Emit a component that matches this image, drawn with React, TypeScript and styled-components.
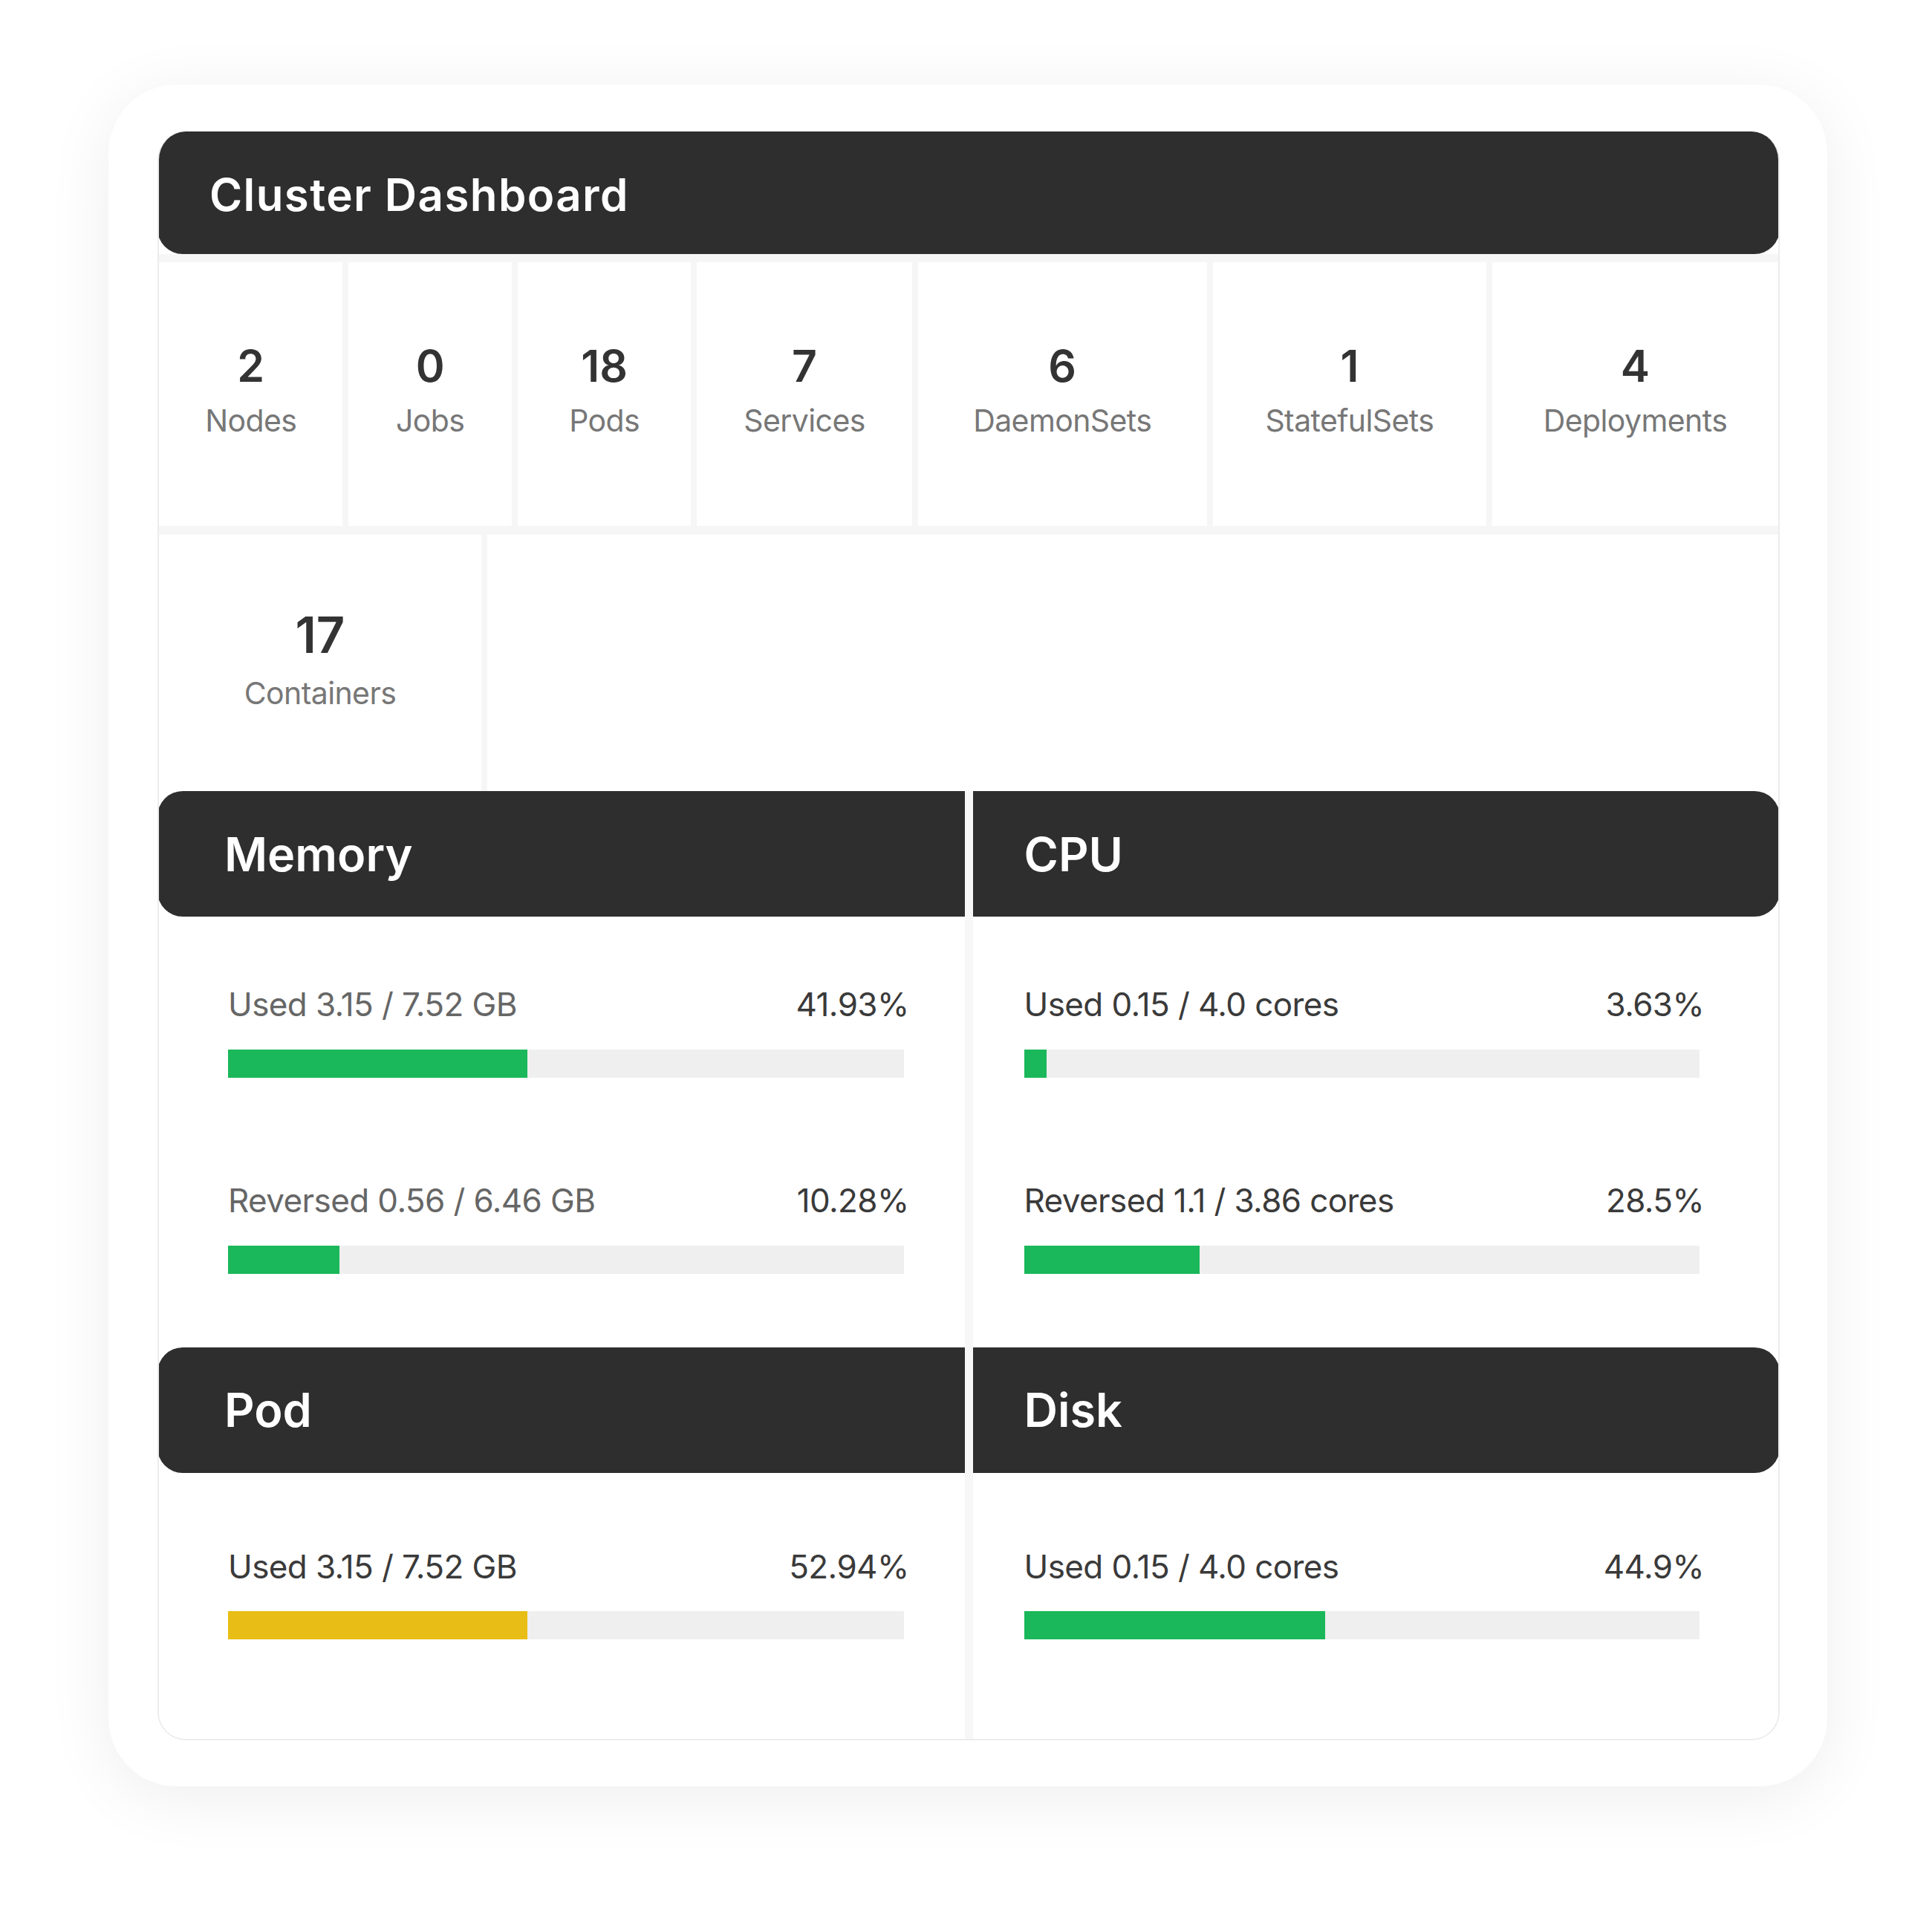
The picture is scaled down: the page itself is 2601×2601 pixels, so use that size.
import React from "react";
import styled, { createGlobalStyle } from "styled-components";

const GlobalStyle = createGlobalStyle`
  * { box-sizing: border-box; }
  body {
    margin: 0;
    background: #ffffff;
    font-family: "Inter", "Noto Sans", "Liberation Sans", sans-serif;
  }
`;

type Side = "left" | "right";

type Metric = { label: string; pct: string; fill: number; color?: string };

const stats = [
  { value: 2, label: "Nodes", basis: 248 },
  { value: 0, label: "Jobs", basis: 220 },
  { value: 18, label: "Pods", basis: 234 },
  { value: 7, label: "Services", basis: 290 },
  { value: 6, label: "DaemonSets", basis: 390 },
  { value: 1, label: "StatefulSets", basis: 369 },
  { value: 4, label: "Deployments", basis: 386 },
];

const sections: {
  side: Side;
  top: { title: string; muted?: boolean; items: Metric[] };
  bottom: { title: string; items: Metric[] };
}[] = [
  {
    side: "left",
    top: {
      title: "Memory",
      muted: true,
      items: [
        { label: "Used 3.15 / 7.52 GB", pct: "41.93%", fill: 44.3 },
        { label: "Reversed 0.56 / 6.46 GB", pct: "10.28%", fill: 16.5 },
      ],
    },
    bottom: {
      title: "Pod",
      items: [{ label: "Used 3.15 / 7.52 GB", pct: "52.94%", fill: 44.3, color: "#e8be16" }],
    },
  },
  {
    side: "right",
    top: {
      title: "CPU",
      items: [
        { label: "Used 0.15 / 4.0 cores", pct: "3.63%", fill: 3.3 },
        { label: "Reversed 1.1 / 3.86 cores", pct: "28.5%", fill: 26 },
      ],
    },
    bottom: {
      title: "Disk",
      items: [{ label: "Used 0.15 / 4.0 cores", pct: "44.9%", fill: 44.6 }],
    },
  },
];

const MetricList = ({ items, side, muted, top, bottom }: {
  items: Metric[];
  side: Side;
  muted?: boolean;
  top: number;
  bottom: number;
}) => (
  <SectionBody $side={side} $top={top} $bottom={bottom}>
    {items.map((it) => (
      <MetricItem key={it.label}>
        <MetricLine $muted={muted}>
          <span>{it.label}</span>
          <Pct>{it.pct}</Pct>
        </MetricLine>
        <Track $side={side}>
          <Fill $color={it.color} style={{ width: `${it.fill}%` }} />
        </Track>
      </MetricItem>
    ))}
  </SectionBody>
);

const App = () => {
  return (
    <>
      <GlobalStyle />
      <Page>
        <Card>
          <Panel>
            <TitleBar>Cluster Dashboard</TitleBar>
            <StatGrid>
              <StatRow>
                {stats.map((s) => (
                  <StatTile key={s.label} $basis={s.basis}>
                    <StatValue>{s.value}</StatValue>
                    <StatLabel>{s.label}</StatLabel>
                  </StatTile>
                ))}
              </StatRow>
              <StatRow $tall={false}>
                <StatTile $basis={434} $fixed>
                  <StatValue $large>17</StatValue>
                  <StatLabel>Containers</StatLabel>
                </StatTile>
                <StatFiller />
              </StatRow>
            </StatGrid>
            <Metrics>
              {sections.map((col) => (
                <MetricColumn key={col.side}>
                  <SectionHead $side={col.side}>{col.top.title}</SectionHead>
                  <MetricList items={col.top.items} side={col.side} muted={col.top.muted} top={92} bottom={99} />
                  <SectionHead $side={col.side}>{col.bottom.title}</SectionHead>
                  <MetricList items={col.bottom.items} side={col.side} top={100} bottom={134} />
                </MetricColumn>
              ))}
            </Metrics>
          </Panel>
        </Card>
      </Page>
    </>
  );
};

const Page = styled.div`
  padding: 114px 0 120px 146px;
`;

const Card = styled.div`
  width: 2314px;
  background: #ffffff;
  border-radius: 92px;
  padding: 63px 64px 62px 66px;
  box-shadow: 0 14px 90px rgba(0, 0, 0, 0.07);
`;

const Panel = styled.div`
  display: flex;
  flex-direction: column;
  border: 2px solid #ececec;
  border-top: none;
  border-radius: 38px;
  background: #ffffff;
  overflow: hidden;
`;

const TitleBar = styled.h1`
  margin: 0 -2px;
  height: 165px;
  display: flex;
  align-items: center;
  padding: 4px 0 0 70px;
  background: #2e2e2e;
  border-radius: 34px;
  color: #ffffff;
  font-size: 60px;
  font-weight: 600;
  letter-spacing: 1.4px;
`;

const StatGrid = styled.div`
  display: flex;
  flex-direction: column;
  gap: 12px;
  padding-top: 11px;
  background: #f6f6f6;
`;

const StatRow = styled.div<{ $tall?: boolean }>`
  display: flex;
  gap: 8px;
  height: ${({ $tall = true }) => ($tall ? "355px" : "345px")};
`;

const StatTile = styled.div<{ $basis: number; $fixed?: boolean }>`
  flex: ${({ $fixed }) => ($fixed ? "0 0" : "1 1")} ${({ $basis }) => $basis}px;
  min-width: 0;
  display: flex;
  flex-direction: column;
  align-items: center;
  justify-content: center;
  padding-bottom: 12px;
  background: #ffffff;
`;

const StatFiller = styled.div`
  flex: 1;
  background: #ffffff;
`;

const StatValue = styled.div<{ $large?: boolean }>`
  font-size: ${({ $large }) => ($large ? "67px" : "59px")};
  font-weight: 600;
  line-height: 1.2;
  color: #333333;
  margin-bottom: 14px;
`;

const StatLabel = styled.div`
  font-size: 41px;
  font-weight: 400;
  line-height: 1.2;
  color: #777777;
  letter-spacing: -0.6px;
  white-space: nowrap;
`;

const Metrics = styled.div`
  display: grid;
  grid-template-columns: 1fr 1fr;
  column-gap: 11px;
  background: #f7f7f7;
`;

const MetricColumn = styled.div`
  display: flex;
  flex-direction: column;
  background: #ffffff;
`;

const SectionHead = styled.h2<{ $side: Side }>`
  margin: 0;
  height: 169px;
  display: flex;
  align-items: center;
  padding-left: ${({ $side }) => ($side === "left" ? "90px" : "69px")};
  background: #2e2e2e;
  color: #ffffff;
  font-size: 63px;
  font-weight: 600;
  margin-left: ${({ $side }) => ($side === "left" ? "-2px" : "0")};
  margin-right: ${({ $side }) => ($side === "right" ? "-2px" : "0")};
  border-radius: ${({ $side }) => ($side === "left" ? "34px 0 0 34px" : "0 34px 34px 0")};
`;

const SectionBody = styled.div<{ $side: Side; $top: number; $bottom: number }>`
  display: flex;
  flex-direction: column;
  gap: 139px;
  padding: ${({ $top }) => $top}px ${({ $side }) => ($side === "left" ? "75px" : "100px")}
    ${({ $bottom }) => $bottom}px ${({ $side }) => ($side === "left" ? "93px" : "69px")};
`;

const MetricItem = styled.div`
  display: flex;
  flex-direction: column;
  gap: 34px;
`;

const MetricLine = styled.div<{ $muted?: boolean }>`
  display: flex;
  justify-content: space-between;
  font-size: 44px;
  line-height: 1.2;
  color: ${({ $muted }) => ($muted ? "#666666" : "#3a3a3a")};
  letter-spacing: -0.6px;
`;

const Pct = styled.span`
  color: #3a3a3a;
`;

const Track = styled.div<{ $side: Side }>`
  height: 38px;
  margin-right: ${({ $side }) => ($side === "left" ? "7px" : "6px")};
  background: #efefef;
`;

const Fill = styled.div<{ $color?: string }>`
  height: 100%;
  background: ${({ $color }) => $color ?? "#1ab85a"};
`;

export default App;
